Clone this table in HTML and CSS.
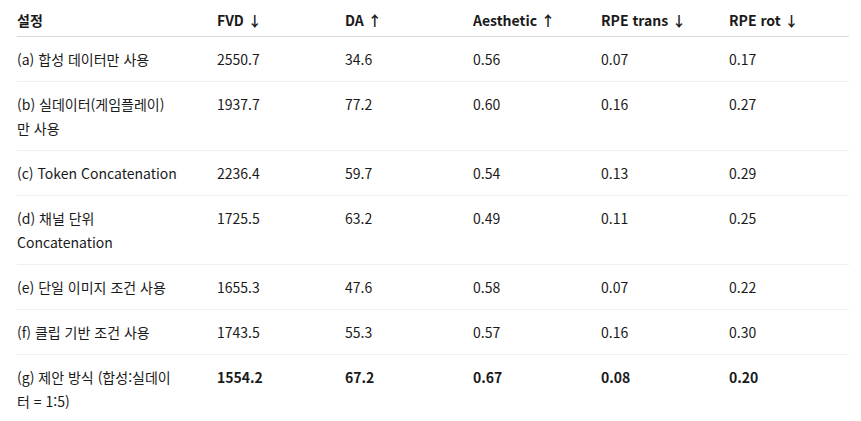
FILE: index.html
```html
<!DOCTYPE html>
<html lang="ko">
<head>
<meta charset="utf-8">
<link rel="stylesheet" href="styles.css">
</head>
<body>
<div class="wrap">
<table class="results">
<colgroup>
<col class="c-name"><col class="c-num"><col class="c-num"><col class="c-num"><col class="c-num"><col class="c-last">
</colgroup>
<thead>
<tr><th>설정</th><th>FVD ↓</th><th>DA ↑</th><th>Aesthetic ↑</th><th>RPE trans ↓</th><th>RPE rot ↓</th></tr>
</thead>
<tbody>
<tr><td>(a) 합성 데이터만 사용</td><td>2550.7</td><td>34.6</td><td>0.56</td><td>0.07</td><td>0.17</td></tr>
<tr><td>(b) 실데이터(게임플레이)<br>만 사용</td><td>1937.7</td><td>77.2</td><td>0.60</td><td>0.16</td><td>0.27</td></tr>
<tr><td>(c) Token Concatenation</td><td>2236.4</td><td>59.7</td><td>0.54</td><td>0.13</td><td>0.29</td></tr>
<tr><td>(d) 채널 단위<br>Concatenation</td><td>1725.5</td><td>63.2</td><td>0.49</td><td>0.11</td><td>0.25</td></tr>
<tr><td>(e) 단일 이미지 조건 사용</td><td>1655.3</td><td>47.6</td><td>0.58</td><td>0.07</td><td>0.22</td></tr>
<tr><td>(f) 클립 기반 조건 사용</td><td>1743.5</td><td>55.3</td><td>0.57</td><td>0.16</td><td>0.30</td></tr>
<tr class="best"><td>(g) 제안 방식 (합성:실데이<br>터 = 1:5)</td><td>1554.2</td><td>67.2</td><td>0.67</td><td>0.08</td><td>0.20</td></tr>
</tbody>
</table>
</div>
</body>
</html>
```
FILE: styles.css
```css
html, body {
  margin: 0;
  padding: 0;
  background: #ffffff;
}
.wrap {
  padding-left: 17px;
}
.results {
  border-collapse: collapse;
  table-layout: fixed;
  width: 832px;
  font-family: "Noto Sans CJK KR", "Noto Sans", "Liberation Sans", sans-serif;
  font-size: 14px;
  line-height: 24px;
  color: #1a1a1a;
}
.c-name { width: 200px; }
.c-num { width: 128px; }
.c-last { width: 120px; }
.results th {
  text-align: left;
  font-weight: 700;
  padding: 8px 12px 4px 0;
  border-bottom: 1px solid #d9d9d9;
}
.results td {
  text-align: left;
  vertical-align: top;
  padding: 10px 12px 10px 0;
  border-bottom: 1px solid #efefef;
}
.results tr.best td {
  border-bottom: none;
}
.results tr.best td + td {
  font-weight: 700;
}
```
